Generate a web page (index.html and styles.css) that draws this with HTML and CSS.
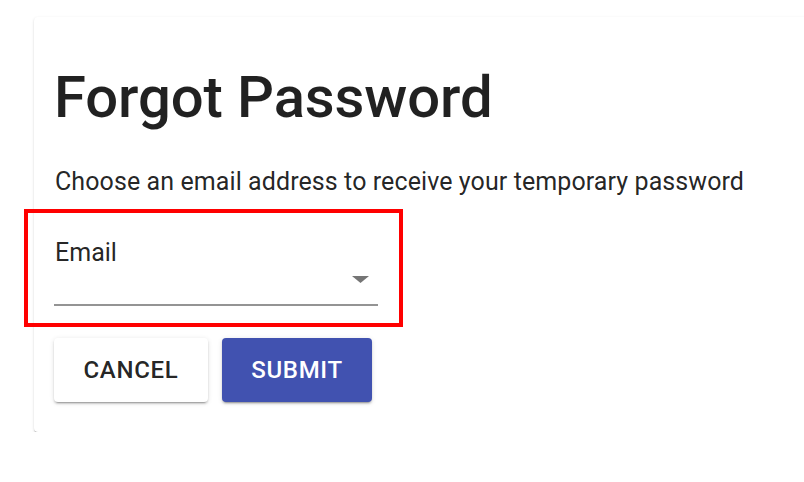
FILE: index.html
```html
<!DOCTYPE html>
<html lang="en">
<head>
    <meta charset="UTF-8">
    <meta name="viewport" content="width=device-width, initial-scale=1.0">
    <title>Forgot Password</title>
    <link rel="stylesheet" href="styles.css">
</head>
<body>
    <div class="card">
        <h1 class="title">Forgot Password</h1>
        <p class="hint">Choose an email address to receive your temporary password</p>
        <div class="field-box">
            <div class="field">
                <span class="field-label">Email</span>
                <svg class="arrow" width="17" height="7" viewBox="0 0 17 7">
                    <path d="M0 0h17l-8.5 7z" fill="#757575"/>
                </svg>
            </div>
        </div>
        <div class="actions">
            <button class="btn btn-cancel">Cancel</button>
            <button class="btn btn-submit">Submit</button>
        </div>
    </div>
</body>
</html>
```

FILE: styles.css
```css
body{
    margin: 0;
    overflow: hidden;
    background: #ffffff;
    font-family: Roboto, "Liberation Sans", sans-serif;
    color: rgba(0, 0, 0, 0.87);
}
.card{
    margin: 17px 0 0 34px;
    width: 800px;
    padding: 20px 20px 30px 20px;
    background: #ffffff;
    border-radius: 4px;
    box-shadow: 0 2px 1px -1px rgba(0,0,0,0.2), 0 1px 1px 0 rgba(0,0,0,0.14), 0 1px 3px 0 rgba(0,0,0,0.12);
}
.title{
    margin: 24px 0 0 0;
    font-size: 58px;
    font-weight: 500;
    line-height: 72px;
    letter-spacing: -0.1px;
}
.hint{
    margin: 34px 0 0 1px;
    font-size: 25px;
    line-height: 30px;
    letter-spacing: 0.09px;
}
/* red highlight round the select */
.field-box{
    width: fit-content;
    margin: 12px 0 0 -30px;
    border: 4px solid #ff0000;
    padding: 0 21px 17px 26px;
}
.field{
    width: 324px;
    height: 91px;
    position: relative;
    border-bottom: 2px solid #949494;
}
.field-label{
    position: absolute;
    left: 1px;
    top: 25px;
    font-size: 25px;
    line-height: 30px;
}
.arrow{
    position: absolute;
    left: 298px;
    top: 63px;
}
.actions{
    display: flex;
    gap: 14px;
    margin-top: 11px;
}
.btn{
    height: 64px;
    border: none;
    border-radius: 4px;
    font-family: Roboto, "Liberation Sans", sans-serif;
    font-size: 24px;
    font-weight: 500;
    letter-spacing: 0.7px;
    text-transform: uppercase;
    box-shadow: 0 3px 1px -2px rgba(0,0,0,0.2), 0 2px 2px 0 rgba(0,0,0,0.14), 0 1px 5px 0 rgba(0,0,0,0.12);
}
.btn-cancel{
    width: 154px;
    background: #ffffff;
    color: rgba(0, 0, 0, 0.87);
}
.btn-submit{
    width: 150px;
    background: #4152b0;
    color: #ffffff;
}
```
